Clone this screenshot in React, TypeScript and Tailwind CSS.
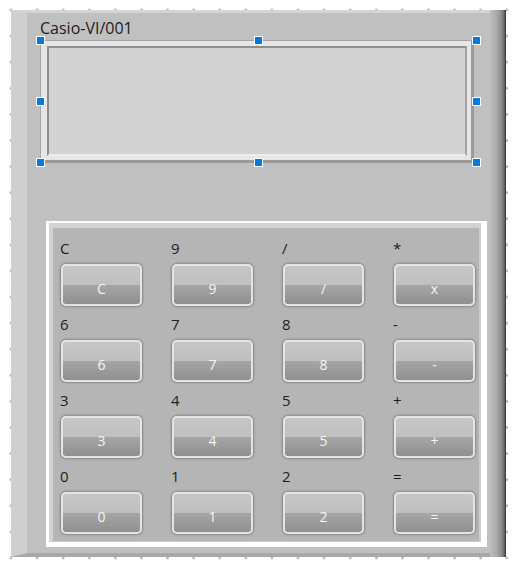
import React from "react";

const labels = ["C", "9", "/", "*", "6", "7", "8", "-", "3", "4", "5", "+", "0", "1", "2", "="];
const captions = ["C", "9", "/", "x", "6", "7", "8", "-", "3", "4", "5", "+", "0", "1", "2", "="];

function Handle({ className }: { className: string }) {
  return <div className={`absolute w-[9px] h-[9px] border border-white bg-[#0a78d7] ${className}`} />;
}

export default function App() {
  return (
    <div
      className="w-[517px] h-[569px] bg-white pl-[11px] pt-[10px] bg-[radial-gradient(circle_at_1.5px_1.5px,#b3b3b3_1px,transparent_1.6px)] bg-size-[26.1px_26.1px] bg-position-[9.5px_8.5px]"
      style={{ fontFamily: '"Open Sans", "Noto Sans", sans-serif' }}
    >
      <div className="flex w-[495px] h-[547px]">
        <div className="flex-1 h-full bg-[#c0c0c0] border-l-[16px] border-t-[3px] border-b-[4px] border-l-[#cfcfcf] border-t-[#d4d4d4] border-b-[#a8a8a8] pt-[4px] pl-[13px]">
          <div className="h-[22px] leading-[22px] text-[16px] text-[#1c1c1c]">Casio-VI/001</div>
          <div className="relative mt-[1px] w-[437px] h-[123px]">
            <div className="w-[434px] h-full bg-[#e6e6e6] border-t border-l border-t-[#a6a6a6] border-l-[#a6a6a6] border-r-[3px] border-b-[3px] border-r-[#9a9a9a] border-b-[#9a9a9a] pt-[5px] pl-[6px] pr-[4px] pb-[4px]">
              <div className="w-full h-full bg-[#d3d3d3] border-2 border-t-[#8e8e8e] border-l-[#8e8e8e] border-r-[#a2a2a2] border-b-[#ececec]" />
            </div>
            <Handle className="left-[-4px] top-[-4px]" />
            <Handle className="left-[214px] top-[-4px]" />
            <Handle className="left-[432px] top-[-4px]" />
            <Handle className="left-[-4px] top-[57px]" />
            <Handle className="left-[432px] top-[57px]" />
            <Handle className="left-[-4px] top-[118px]" />
            <Handle className="left-[214px] top-[118px]" />
            <Handle className="left-[432px] top-[118px]" />
          </div>
          <div className="mt-[58px] ml-[6px] w-[441px] h-[326px] bg-white pt-[2px] pl-[3px] pr-[6px] pb-[5px]">
            <div className="w-full h-full bg-[#b5b5b5] border-t-[5px] border-l-[4px] border-r-[2px] border-b-[1px] border-t-[#d2d2d2] border-l-[#d2d2d2] border-r-[#cdcdcd] border-b-[#cdcdcd] pt-[10px] pl-[8px]">
              <div className="grid grid-cols-[repeat(4,81px)] gap-x-[30px] gap-y-[8px]">
                {labels.map((l, i) => (
                  <div key={i} className="flex flex-col">
                    <div className="h-[20px] leading-[20px] text-[15px] text-[#1e1e1e] -ml-[1px]">{l}</div>
                    <div className="mt-[6px] h-[42px] rounded-[5px] border-2 border-[#e4e4e4] shadow-[0_0_2px_1px_rgba(0,0,0,0.25)] bg-[linear-gradient(to_bottom,#c6c6c6_0%,#bfbfbf_50%,#a6a6a6_50%,#8f8f8f_100%)] flex justify-center">
                      <span className="pt-[13px] leading-[19px] text-[14px] text-[#f4f4f4]">{captions[i]}</span>
                    </div>
                  </div>
                ))}
              </div>
            </div>
          </div>
        </div>
        <div className="w-[16px] h-full bg-[linear-gradient(to_right,#bdbdbd_0%,#aaaaaa_40%,#8e8e8e_70%,#6c6c6c_88%,#2e2e2e_100%)]" />
      </div>
    </div>
  );
}
